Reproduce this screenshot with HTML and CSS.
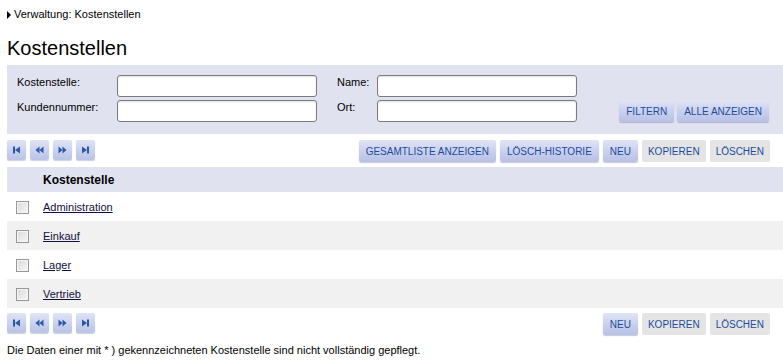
FILE: index.html
```html
<html lang="de">
<head>
    <meta charset="UTF-8">
    <title>Kostenstellen</title>
    <link rel="stylesheet" href="styles.css">
</head>
<body>

<div class="crumb"><span class="crumb-arrow"></span>Verwaltung: Kostenstellen</div>
<h1 class="title">Kostenstellen</h1>

<div class="filter">
    <label class="flabel">Kostenstelle:</label>
    <input class="finput" type="text">
    <label class="flabel">Name:</label>
    <input class="finput" type="text">
    <div></div>

    <label class="flabel">Kundennummer:</label>
    <input class="finput" type="text">
    <label class="flabel">Ort:</label>
    <input class="finput" type="text">
    <div class="fbuttons">
        <button class="btn">FILTERN</button>
        <button class="btn">ALLE ANZEIGEN</button>
    </div>
</div>

<div class="toolbar">
    <div class="nav">
        <button class="navbtn"><svg width="9" height="8" viewBox="0 0 9 8"><rect x="1" y="0.5" width="2" height="7" fill="#2a58aa"/><polygon points="8,0.5 3,4 8,7.5" fill="#2a58aa"/></svg></button>
        <button class="navbtn"><svg width="9" height="8" viewBox="0 0 9 8"><polygon points="4.5,0.5 0.5,4 4.5,7.5" fill="#2a58aa"/><polygon points="8.5,0.5 4.5,4 8.5,7.5" fill="#2a58aa"/></svg></button>
        <button class="navbtn"><svg width="9" height="8" viewBox="0 0 9 8"><polygon points="0.5,0.5 4.5,4 0.5,7.5" fill="#2a58aa"/><polygon points="4.5,0.5 8.5,4 4.5,7.5" fill="#2a58aa"/></svg></button>
        <button class="navbtn"><svg width="9" height="8" viewBox="0 0 9 8"><polygon points="1,0.5 6,4 1,7.5" fill="#2a58aa"/><rect x="6" y="0.5" width="2" height="7" fill="#2a58aa"/></svg></button>
    </div>
    <div class="actions">
        <button class="btn">GESAMTLISTE ANZEIGEN</button>
        <button class="btn">LÖSCH-HISTORIE</button>
        <button class="btn">NEU</button>
        <button class="btn off">KOPIEREN</button>
        <button class="btn off">LÖSCHEN</button>
    </div>
</div>

<table class="list">
    <tr class="head">
        <th class="cb-col"></th>
        <th>Kostenstelle</th>
    </tr>
    <tr>
        <td class="cb-col"><input type="checkbox" class="cb"></td>
        <td><a href="#">Administration</a></td>
    </tr>
    <tr class="alt">
        <td class="cb-col"><input type="checkbox" class="cb"></td>
        <td><a href="#">Einkauf</a></td>
    </tr>
    <tr>
        <td class="cb-col"><input type="checkbox" class="cb"></td>
        <td><a href="#">Lager</a></td>
    </tr>
    <tr class="alt">
        <td class="cb-col"><input type="checkbox" class="cb"></td>
        <td><a href="#">Vertrieb</a></td>
    </tr>
</table>

<div class="toolbar bottom">
    <div class="nav">
        <button class="navbtn"><svg width="9" height="8" viewBox="0 0 9 8"><rect x="1" y="0.5" width="2" height="7" fill="#2a58aa"/><polygon points="8,0.5 3,4 8,7.5" fill="#2a58aa"/></svg></button>
        <button class="navbtn"><svg width="9" height="8" viewBox="0 0 9 8"><polygon points="4.5,0.5 0.5,4 4.5,7.5" fill="#2a58aa"/><polygon points="8.5,0.5 4.5,4 8.5,7.5" fill="#2a58aa"/></svg></button>
        <button class="navbtn"><svg width="9" height="8" viewBox="0 0 9 8"><polygon points="0.5,0.5 4.5,4 0.5,7.5" fill="#2a58aa"/><polygon points="4.5,0.5 8.5,4 4.5,7.5" fill="#2a58aa"/></svg></button>
        <button class="navbtn"><svg width="9" height="8" viewBox="0 0 9 8"><polygon points="1,0.5 6,4 1,7.5" fill="#2a58aa"/><rect x="6" y="0.5" width="2" height="7" fill="#2a58aa"/></svg></button>
    </div>
    <div class="actions">
        <button class="btn">NEU</button>
        <button class="btn off">KOPIEREN</button>
        <button class="btn off">LÖSCHEN</button>
    </div>
</div>

<p class="note">Die Daten einer mit * ) gekennzeichneten Kostenstelle sind nicht vollständig gepflegt.</p>

</body>
</html>
```

FILE: styles.css
```css
body {
    margin: 0;
    padding-left: 7px;
    font-family: "Liberation Sans", Arial, sans-serif;
    font-size: 11px;
    line-height: 13px;
    color: #000;
    background: #fff;
}

/* breadcrumb */
.crumb {
    padding-top: 8px;
    display: flex;
    align-items: center;
}

.crumb-arrow {
    width: 0;
    height: 0;
    border-top: 4px solid transparent;
    border-bottom: 4px solid transparent;
    border-left: 4px solid #000;
    margin-right: 3px;
}

.title {
    margin: 15px 0 5px 0;
    font-size: 20px;
    line-height: 24px;
    font-weight: normal;
}

/* filter panel */
.filter {
    background-color: #e1e2ef;
    padding: 10px 14px 12px 10px;
    display: grid;
    grid-template-columns: 100px 200px 40px 200px 1fr;
    grid-template-rows: 22px 22px;
    column-gap: 0;
    row-gap: 3px;
}

.flabel {
    align-self: start;
    padding-top: 1px;
}

.filter .flabel:nth-of-type(2),
.filter .flabel:nth-of-type(4) {
    margin-left: 20px;
    margin-right: -20px;
}

.finput {
    box-sizing: border-box;
    width: 200px;
    height: 22px;
    margin: 0;
    border: 1px solid #7b7b7b;
    border-radius: 3px;
    background: #fff;
    box-shadow: inset 0 1px 2px rgba(0, 0, 0, 0.12);
    font-family: inherit;
    font-size: 11px;
}

.filter .finput:nth-of-type(2),
.filter .finput:nth-of-type(4) {
    margin-left: 20px;
}

.fbuttons {
    display: flex;
    justify-content: flex-end;
    gap: 3px;
}

/* buttons */
.btn {
    height: 22px;
    padding: 0 7px;
    margin: 0;
    border: none;
    border-radius: 2px;
    background: linear-gradient(#e0e4f6, #c6cdec 60%, #b8c1e6);
    box-shadow: 0 1px 1px rgba(90, 100, 150, 0.35);
    color: #1a4c9e;
    font-family: inherit;
    font-size: 10px;
    cursor: pointer;
}

.btn.off {
    background: #e4e4e4;
    box-shadow: none;
    padding: 0 6px;
}

.navbtn {
    width: 19px;
    height: 20px;
    padding: 0;
    margin: 0;
    border: none;
    border-radius: 2px;
    background: linear-gradient(#e0e4f6, #c8cfec 60%, #bac3e6);
    box-shadow: 0 1px 1px rgba(90, 100, 150, 0.3);
    display: flex;
    align-items: center;
    justify-content: center;
}

.toolbar {
    margin-top: 6px;
    padding-right: 13px;
    display: flex;
    justify-content: space-between;
    align-items: flex-start;
}

.toolbar.bottom {
    margin-top: 5px;
}

.nav {
    display: flex;
    gap: 4px;
}

.actions {
    display: flex;
    gap: 4px;
}

/* list */
.list {
    width: 100%;
    margin-top: 5px;
    border-collapse: collapse;
    font-size: 11px;
}

.list th {
    height: 25px;
    padding: 0;
    background-color: #e1e2ef;
    text-align: left;
    font-size: 12px;
    font-weight: bold;
}

.list td {
    height: 29px;
    padding: 0;
    font-size: 11px;
}

.list .alt td {
    background-color: #f1f1f1;
}

.cb-col {
    width: 36px;
}

.cb {
    appearance: none;
    -webkit-appearance: none;
    display: block;
    width: 13px;
    height: 13px;
    margin: 2px 0 0 9px;
    border: 1px solid #979797;
    box-sizing: border-box;
    background: linear-gradient(135deg, #dadada, #f6f6f6);
    box-shadow: inset 0 0 0 1px #f6f6f6;
}

.list a {
    color: #10103c;
    text-decoration: underline;
}

.note {
    margin: 9px 0 0 0;
}
```
